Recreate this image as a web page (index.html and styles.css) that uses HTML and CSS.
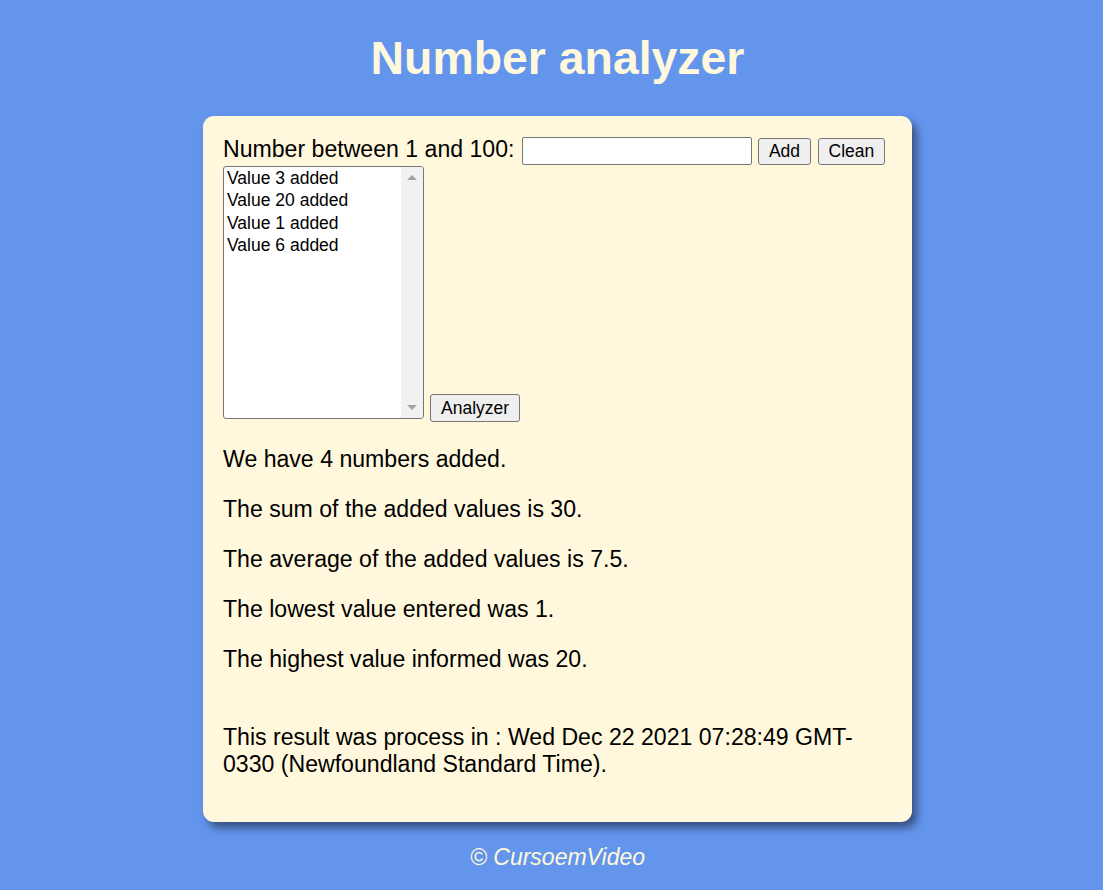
FILE: index.html
```html
<!DOCTYPE html>
<html lang="en">
<head>
<meta charset="utf-8">
<title>Number analyzer</title>
<link rel="stylesheet" href="styles.css">
</head>
<body>
<header class="top">
  <h1 class="title">Number analyzer</h1>
</header>
<main class="card">
  <div class="row-input">
    <label class="label" for="num">Number between 1 and 100:</label>
    <input class="field" type="number" id="num">
    <button class="btn btn-add" type="button">Add</button>
    <button class="btn btn-clean" type="button">Clean</button>
  </div>
  <div class="row-list">
    <div class="listbox">
      <div class="options">
        <div class="option">Value 3 added</div>
        <div class="option">Value 20 added</div>
        <div class="option">Value 1 added</div>
        <div class="option">Value 6 added</div>
      </div>
      <div class="scrollbar">
        <span class="arrow arrow-up"></span>
        <span class="arrow arrow-down"></span>
      </div>
    </div>
    <button class="btn btn-analyze" type="button">Analyzer</button>
  </div>
  <section class="results">
    <p class="result">We have 4 numbers added.</p>
    <p class="result">The sum of the added values is 30.</p>
    <p class="result">The average of the added values is 7.5.</p>
    <p class="result">The lowest value entered was 1.</p>
    <p class="result">The highest value informed was 20.</p>
    <p class="result result-time">This result was process in : Wed Dec 22 2021 07:28:49 GMT-0330 (Newfoundland Standard Time).</p>
  </section>
</main>
<footer class="foot">
  <p class="copy">&copy; CursoemVideo</p>
</footer>
</body>
</html>
```

FILE: styles.css
```css
html, body {
  margin: 0;
  padding: 0;
}

body {
  background: #6495ed;
  font-family: "Liberation Sans", Arial, sans-serif;
  padding-left: 12px;
  color: #000;
}

.title {
  margin: 32px 0 30px;
  font-size: 46.4px;
  font-weight: bold;
  line-height: 53.6px;
  color: #fff8dc;
  text-align: center;
}

.card {
  width: 709px;
  box-sizing: border-box;
  margin: 0 auto;
  padding: 18px 20px 21px;
  background: #fff8dc;
  border-radius: 11px;
  box-shadow: 5px 6px 8px rgba(0, 0, 0, 0.45);
}

.row-input {
  display: flex;
  align-items: flex-start;
}

.label {
  font-size: 23.1px;
  line-height: 26.8px;
  margin-top: 2px;
  margin-right: 8px;
}

.field {
  margin: 3px 6px 0 0;
  width: 230px;
  height: 28px;
  box-sizing: border-box;
  border: 1px solid #767676;
  border-radius: 2px;
  background: #fff;
  padding: 0 3px;
  font: 17.5px "Liberation Sans", Arial, sans-serif;
}

.btn {
  box-sizing: border-box;
  height: 27px;
  padding: 0 10px;
  border: 1px solid #767676;
  border-radius: 3px;
  background: #efefef;
  color: #000;
  font: 17.5px "Liberation Sans", Arial, sans-serif;
  line-height: 25px;
}

.btn-add {
  margin-top: 4px;
  margin-right: 7px;
  padding: 0 9.5px;
}

.btn-clean {
  margin-top: 4px;
}

.row-list {
  display: flex;
  align-items: flex-end;
  margin-top: 1px;
}

.listbox {
  display: flex;
  width: 201px;
  height: 253px;
  box-sizing: border-box;
  border: 1px solid #767676;
  border-radius: 3px;
  background: #fff;
  overflow: hidden;
}

.options {
  flex: 1;
  font-size: 17.5px;
  padding-top: 1px;
}

.option {
  line-height: 21px;
  padding: 0 2px 1.5px 3px;
  white-space: nowrap;
}

.scrollbar {
  width: 22px;
  background: #f1f1f1;
  display: flex;
  flex-direction: column;
  justify-content: space-between;
  align-items: center;
  padding: 8px 0;
  box-sizing: border-box;
}

.arrow {
  width: 0;
  height: 0;
  border-left: 5px solid transparent;
  border-right: 5px solid transparent;
}

.arrow-up {
  border-bottom: 5px solid #a3a3a3;
}

.arrow-down {
  border-top: 5px solid #a3a3a3;
}

.btn-analyze {
  margin-left: 6px;
  margin-bottom: -3px;
  height: 28px;
  line-height: 26px;
}

.results {
  padding-top: 4px;
}

.result {
  font-size: 23.1px;
  line-height: 26.8px;
  margin: 23.3px 0;
}

.result-time {
  margin-top: 50.8px;
}

.foot {
  text-align: center;
}

.copy {
  margin: 22px 0 0;
  font-size: 23px;
  line-height: 26.4px;
  font-style: italic;
  color: #fff8dc;
}
```
